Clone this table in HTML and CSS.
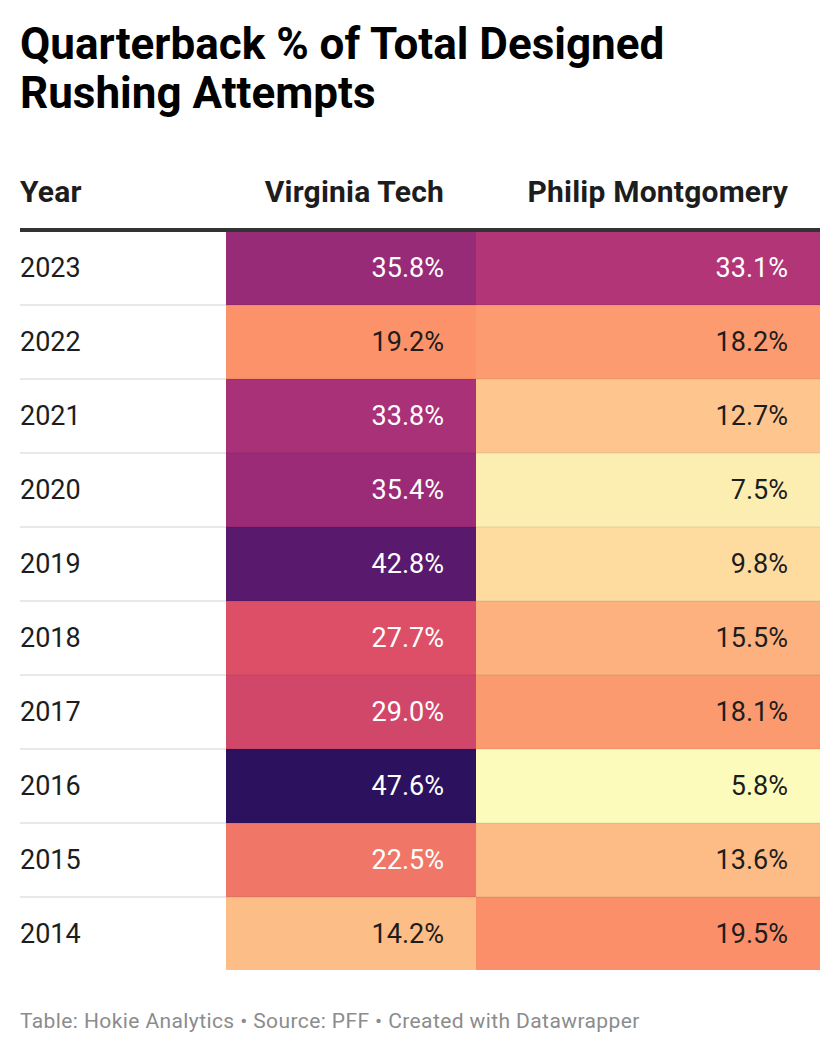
FILE: index.html
```html
<!DOCTYPE html>
<html lang="en">
<head>
<meta charset="utf-8">
<title>Quarterback % of Total Designed Rushing Attempts</title>
<link rel="stylesheet" href="styles.css">
</head>
<body>
<div class="chart">
  <h1 class="title">Quarterback % of Total Designed Rushing Attempts</h1>
  <table class="table">
    <thead>
      <tr>
        <th class="col-year">Year</th>
        <th class="col-num col-vt">Virginia Tech</th>
        <th class="col-num col-pm">Philip Montgomery</th>
      </tr>
    </thead>
    <tbody>
      <tr><td class="year">2023</td><td class="num light" style="background:#982b77">35.8%</td><td class="num light" style="background:#b13577">33.1%</td></tr>
      <tr><td class="year">2022</td><td class="num" style="background:#fb926a">19.2%</td><td class="num" style="background:#fb9b6f">18.2%</td></tr>
      <tr><td class="year">2021</td><td class="num light" style="background:#a83178">33.8%</td><td class="num" style="background:#fec68e">12.7%</td></tr>
      <tr><td class="year">2020</td><td class="num light" style="background:#9c2b77">35.4%</td><td class="num" style="background:#fcedb1">7.5%</td></tr>
      <tr><td class="year">2019</td><td class="num light" style="background:#591a6e">42.8%</td><td class="num" style="background:#fedca0">9.8%</td></tr>
      <tr><td class="year">2018</td><td class="num light" style="background:#dc4f67">27.7%</td><td class="num" style="background:#fdb17f">15.5%</td></tr>
      <tr><td class="year">2017</td><td class="num light" style="background:#d1476a">29.0%</td><td class="num" style="background:#fb9a6f">18.1%</td></tr>
      <tr><td class="year">2016</td><td class="num light" style="background:#2c115f">47.6%</td><td class="num" style="background:#fcfbbc">5.8%</td></tr>
      <tr><td class="year">2015</td><td class="num light" style="background:#f07767">22.5%</td><td class="num" style="background:#fdbc86">13.6%</td></tr>
      <tr><td class="year">2014</td><td class="num" style="background:#fdbd86">14.2%</td><td class="num" style="background:#fa8f69">19.5%</td></tr>
    </tbody>
  </table>
  <p class="footer">Table: Hokie Analytics • Source: PFF • Created with Datawrapper</p>
</div>
</body>
</html>
```

FILE: styles.css
```css
html, body {
  margin: 0;
  padding: 0;
  background: #ffffff;
}

body {
  font-family: Roboto, "Liberation Sans", Arial, sans-serif;
  color: #1d1d1d;
}

.chart {
  padding: 20px 20px 0 20px;
}

.title {
  margin: 0;
  font-size: 44px;
  line-height: 49px;
  font-weight: 700;
  color: #000000;
}

.table {
  margin-top: 56px;
  width: 800px;
  border-collapse: collapse;
  table-layout: fixed;
}

.table th {
  font-size: 30px;
  line-height: 36px;
  font-weight: 700;
  color: #1d1d1d;
  padding: 0 0 18px 0;
  border-bottom: 4px solid #333333;
  letter-spacing: 0.2px;
}

.col-year {
  width: 206px;
  text-align: left;
}

.col-vt {
  width: 218px;
}

.col-num {
  text-align: right;
  padding-right: 32px !important;
}

.table td {
  height: 72px;
  padding: 0;
  font-size: 27px;
  line-height: 36px;
  border-bottom: 2px solid rgba(0, 0, 0, 0.045);
  vertical-align: middle;
}

.table td.year {
  text-align: left;
  border-bottom-color: #e8e8e8;
}

.table td.num {
  text-align: right;
  padding-right: 32px;
  color: #1d1d1d;
}

.table td.light {
  color: #ffffff;
}

.table tbody tr:last-child td {
  border-bottom: none;
}

.footer {
  margin: 39px 0 0 0;
  font-size: 21px;
  line-height: 24px;
  letter-spacing: 0.4px;
  color: #8c8c8c;
}
```
